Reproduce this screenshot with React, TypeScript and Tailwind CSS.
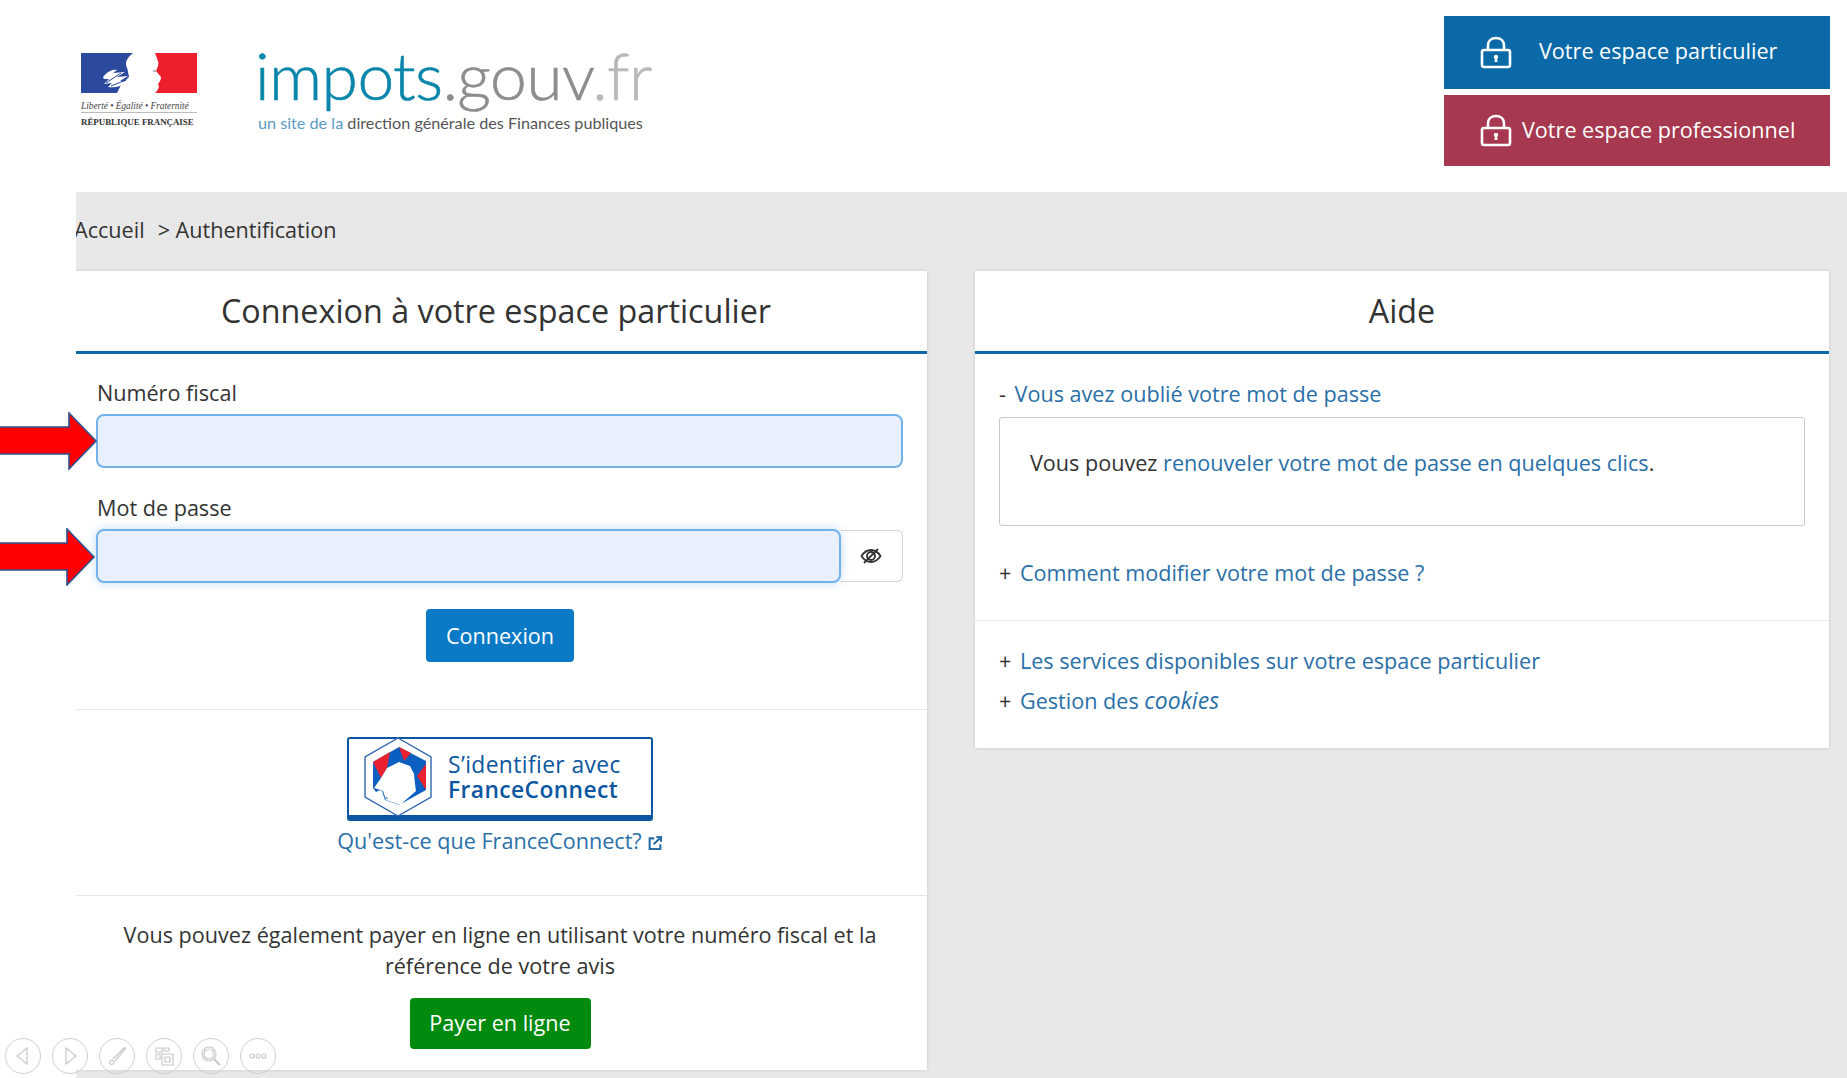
const OPEN_SANS = '"Open Sans", "Noto Sans", sans-serif';

function Lock() {
  return (
    <svg width="32" height="33" viewBox="0 0 32 33" fill="none" stroke="white" strokeWidth="2.6" className="shrink-0">
      <path d="M8 14V9.5C8 4.8 11.4 2 16 2s8 2.8 8 7.5V14" />
      <rect x="2" y="14" width="28" height="17" rx="2" />
      <circle cx="16" cy="21" r="2.2" fill="white" stroke="none" />
      <path d="M15 22h2l.6 4h-3.2z" fill="white" stroke="none" />
    </svg>
  );
}

function Marianne() {
  return (
    <svg width="116" height="40" viewBox="0 0 116 40" className="block">
      <path d="M0 0h52c-4 3-7 7-7 11 0 3 2 5 2 8l1 5-8 8-4 8H0z" fill="#2b4a9e" />
      <path d="M74 0h42v40H74c3-3 5-6 3-9 2-2 3-5 3-7l-5-6c2-4 3-8 2-10z" fill="#ee1f2c" />
      <path d="M22 24c4-5 9-8 14-7l-4 3 12-1-8 5 11-1-8 5 8 1c-5 4-13 6-20 5l4-4-8 1 5-5-5 0z" fill="#fff" />
      <path d="M25 30 40 20M30 33l15-6" stroke="#2b4a9e" strokeWidth="1" fill="none" />
      <path d="M72 18h3" stroke="#777" strokeWidth="1" />
    </svg>
  );
}

function SiteLogo() {
  return (
    <div className="flex items-start pl-[81px] pt-[53px]">
      <div className="w-[116px] shrink-0">
        <Marianne />
        <div className="mt-[8px] border-b border-[#bbb] pb-[1px] text-[9.3px] leading-[10px] whitespace-nowrap text-[#444] italic" style={{ fontFamily: '"Liberation Serif", serif' }}>
          Liberté • Égalité • Fraternité
        </div>
        <div className="mt-[3px] text-[8.9px] leading-[12px] font-bold whitespace-nowrap text-[#333]" style={{ fontFamily: '"Liberation Serif", serif' }}>
          RÉPUBLIQUE FRANÇAISE
        </div>
      </div>
      <div className="-mt-[19px] ml-[58px] w-[420px] shrink-0 whitespace-nowrap" style={{ fontFamily: 'Lato, sans-serif' }}>
        <div className="text-[66px] leading-[82px] font-light tracking-[-0.6px] [-webkit-text-stroke:0.6px]">
          <span className="text-[#0a86ab]">impots</span>
          <span className="text-[#8d8d8d]">.gouv</span>
          <span className="text-[#b8b8b8]">.fr</span>
        </div>
        <div className="-mt-[3px] pl-[3px] text-[16.2px] leading-[20px]">
          <span className="text-[#5b9bc4]">un site de la </span>
          <span className="text-[#555]">direction générale des Finances publiques</span>
        </div>
      </div>
    </div>
  );
}

function RedArrow({ className }: { className: string }) {
  return (
    <svg width="98" height="58" viewBox="0 0 98 58" className={className}>
      <path d="M-2 15H69V1L96 29 69 57V42H-2z" fill="#fe0000" stroke="#2f528f" strokeWidth="1.6" />
    </svg>
  );
}

function FranceConnectLogo() {
  return (
    <svg width="70" height="80" viewBox="0 0 70 80" className="shrink-0">
      <path d="M35 1 68 20v40L35 79 2 60V20z" fill="#fff" stroke="#2f66b0" strokeWidth="1.4" />
      <path d="M10 25 36 10l27 14v29L36 68 22 63l-3-9-9-3z" fill="#0b5fc0" />
      <path d="M10 25 27 15l-3 16-6 10z" fill="#e8202f" />
      <path d="M36 10l12 6-7 8z" fill="#e8202f" />
      <path d="M63 27v26l-9-14z" fill="#e8202f" />
      <path d="M18 41l6-10 12-6 11 4 4 8 1 10 1 7-16 14-14-5-3-9-9-3z" fill="#fff" />
      <path d="M10 51l7 2-4 2zM22 60l3 1-1 1z" fill="#0b5fc0" />
    </svg>
  );
}

function HiddenEye() {
  return (
    <svg width="22" height="18" viewBox="0 0 22 18" fill="none" stroke="#333" strokeWidth="1.8">
      <path d="M1.500 9C4 5 7 3 11 3s7 2 9.500 6c-2.500 4-5.500 6-9.500 6S4 13 1.500 9z" />
      <circle cx="11" cy="9" r="4" />
      <path d="M4 16 18 2" />
    </svg>
  );
}

function ToolbarButton({ children }: { children: React.ReactNode }) {
  return (
    <div className="flex h-[36px] w-[36px] shrink-0 items-center justify-center rounded-full border border-[#d0d0d0]">
      <svg width="24" height="24" viewBox="0 0 24 24" fill="none" stroke="#c8c8c8" strokeWidth="1.2">
        {children}
      </svg>
    </div>
  );
}

function SlideToolbar() {
  return (
    <div className="absolute top-[1038px] left-[5px] flex gap-[11px]">
      <ToolbarButton><path d="M16 4v16L6 12z" /></ToolbarButton>
      <ToolbarButton><path d="M8 4v16l10-8z" /></ToolbarButton>
      <ToolbarButton><path d="M5 20c-1-2 0-4 2-4l2 2c0 2-2 3-4 2zM8 15 19 4c1-1 2 0 1 1L10 17" /></ToolbarButton>
      <ToolbarButton><path d="M4 4h6v4H4zM12 4h5v3h-5zM4 10h4v5H4zM10 10h11v11H10zM13 13h5v5h-5z" /></ToolbarButton>
      <ToolbarButton><circle cx="10" cy="10" r="7" /><circle cx="10" cy="10" r="5" /><path d="m15 15 6 6" strokeWidth="2.2" /></ToolbarButton>
      <ToolbarButton><circle cx="6" cy="12" r="2" /><circle cx="12" cy="12" r="2" /><circle cx="18" cy="12" r="2" /></ToolbarButton>
    </div>
  );
}

export default function App() {
  return (
    <div className="relative flex h-[1078px] w-full flex-col overflow-hidden bg-white text-[21.6px] text-[#333]" style={{ fontFamily: OPEN_SANS }}>
      <header className="flex h-[192px] shrink-0 justify-between">
        <SiteLogo />
        <div className="mt-[16px] mr-[17px] flex w-[386px] flex-col gap-[6px] text-white">
          <a className="flex h-[73px] items-center bg-[#0b69a8] pl-[36px]">
            <Lock />
            <span className="ml-[27px] pb-[2px] whitespace-nowrap">Votre espace particulier</span>
          </a>
          <a className="flex h-[71px] items-center bg-[#a6384f] pl-[36px]">
            <Lock />
            <span className="ml-[10px] whitespace-nowrap">Votre espace professionnel</span>
          </a>
        </div>
      </header>

      <main className="ml-[76px] flex flex-1 flex-col overflow-hidden bg-[#e8e8e8] pr-[17px] pb-[8px]">
        <nav className="-ml-[2px] flex h-[79px] shrink-0 items-center whitespace-nowrap pb-[3px]">
          <span>Accueil</span>
          <span className="ml-[13px]">&gt; Authentification</span>
        </nav>

        <div className="flex flex-1 items-start gap-[48px]">
          <section className="flex h-full w-[851px] shrink-0 flex-col bg-white shadow-[0_0_3px_rgba(0,0,0,0.15)]">
            <h1 className="flex h-[83px] shrink-0 items-center justify-center border-b-[3px] border-[#0b69a8] pr-[11px] pb-[2px] text-[32.3px]">
              Connexion à votre espace particulier
            </h1>

            <form className="px-[20px] pt-[24px]">
              <label className="block pl-[1px] leading-[30px]">Numéro fiscal</label>
              <input className="mt-[6px] block h-[54px] w-[807px] rounded-[8px] border-2 border-[#72b2e8] bg-[#e8f0fe]" />
              <label className="mt-[25px] block pl-[1px] leading-[30px]">Mot de passe</label>
              <div className="mt-[6px] flex h-[54px] w-[807px]">
                <input className="h-[54px] w-[745px] rounded-[8px] border-2 border-[#72b2e8] bg-[#e8f0fe] shadow-[0_0_10px_rgba(110,175,235,0.45)]" />
                <div className="flex h-[52px] flex-1 items-center justify-center self-center rounded-r-[6px] border border-l-0 border-[#d4d4d4] pr-[2px]">
                  <HiddenEye />
                </div>
              </div>
              <div className="mt-[26px] flex justify-center pr-[3px]">
                <button type="button" className="h-[53px] w-[148px] rounded-[4px] bg-[#0b7ac6] pt-[1px] text-white">Connexion</button>
              </div>
            </form>

            <div className="mt-[47px] flex flex-col items-center border-t border-[#e6e6e6] pt-[27px] pr-[3px]">
              <div className="flex h-[84px] w-[306px] items-center rounded-[3px] border-2 border-b-[6px] border-[#0b56a0] pl-[14px]">
                <FranceConnectLogo />
                <div className="ml-[15px] text-[22.8px] leading-[25px] tracking-[0.4px] whitespace-nowrap text-[#0b56a0]">
                  <div>S’identifier avec</div>
                  <div className="font-semibold">FranceConnect</div>
                </div>
              </div>
              <a className="mt-[5px] flex items-center leading-[30px] whitespace-nowrap text-[#2a6fa8]">
                Qu'est-ce que FranceConnect?
                <svg width="16" height="16" viewBox="0 0 24 24" fill="none" stroke="#2a6fa8" strokeWidth="3.2" className="mt-[3px] ml-[5px]">
                  <path d="M11 5H4v16h16v-7M14 3h7v7M21 3 10 14" />
                </svg>
              </a>
            </div>

            <div className="mt-[39px] flex flex-col items-center border-t border-[#e6e6e6] px-[30px] pt-[23px] text-center">
              <p className="pr-[3px] leading-[31px]">
                Vous pouvez également payer en ligne en utilisant votre numéro fiscal et la
                <br />
                référence de votre avis
              </p>
              <button type="button" className="mt-[17px] mr-[3px] h-[51px] w-[181px] rounded-[4px] bg-[#008a0e] text-white">Payer en ligne</button>
            </div>
          </section>

          <section className="w-[854px] shrink-0 bg-white shadow-[0_0_3px_rgba(0,0,0,0.15)]">
            <h2 className="flex h-[83px] items-center justify-center border-b-[3px] border-[#0b69a8] pb-[2px] text-[32.3px]">Aide</h2>
            <div className="px-[24px] pt-[25px]">
              <div className="leading-[30px]">
                - <a className="ml-[3px] text-[#2a6fa8]">Vous avez oublié votre mot de passe</a>
              </div>
              <div className="mt-[8px] h-[109px] rounded-[3px] border border-[#c8c8c8] pt-[30px] pl-[30px] leading-[30px]">
                Vous pouvez <a className="text-[#2a6fa8]">renouveler votre mot de passe en quelques clics</a>.
              </div>
              <div className="mt-[32px] leading-[30px]">
                + <a className="ml-[3px] text-[#2a6fa8]">Comment modifier votre mot de passe ?</a>
              </div>
            </div>
            <div className="mt-[32px] border-t border-[#e6e6e6] px-[24px] pt-[25px] pb-[32px] leading-[30px]">
              <div>
                + <a className="ml-[3px] text-[#2a6fa8]">Les services disponibles sur votre espace particulier</a>
              </div>
              <div className="mt-[9px]">
                + <a className="ml-[3px] text-[#2a6fa8]">Gestion des <em className="text-[23px]">cookies</em></a>
              </div>
            </div>
          </section>
        </div>
      </main>

      <RedArrow className="absolute top-[412px] left-0" />
      <RedArrow className="absolute top-[528px] -left-[2px]" />
      <SlideToolbar />
    </div>
  );
}
